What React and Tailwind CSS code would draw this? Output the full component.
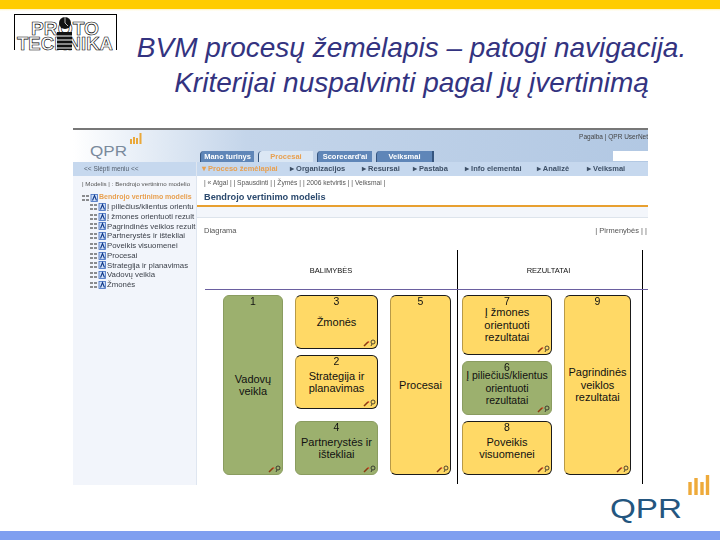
import React from 'react';

const FONT = { fontFamily: '"Liberation Sans", Arial, sans-serif' };

function ProtoLogo() {
  return (
    <div className="w-[103px] h-[36px] border-t border-l border-r border-black shrink-0 ml-[14px] mt-[3px]">
      <svg width="101" height="40" viewBox="0 0 101 40">
        <text x="16" y="20" textLength="68" lengthAdjust="spacingAndGlyphs" fontSize="19" fontWeight="700" fontFamily="Liberation Sans" fill="#fff" stroke="#000" strokeWidth="0.6">PROTO</text>
        <text x="2" y="35" textLength="96" lengthAdjust="spacingAndGlyphs" fontSize="19" fontWeight="700" fontFamily="Liberation Sans" fill="#fff" stroke="#000" strokeWidth="0.6">TECHNIKA</text>
        <circle cx="50" cy="8" r="6" fill="#111" />
        <path d="M50 2v6l3 3" stroke="#fff" strokeWidth="0.7" fill="none" />
        <rect x="42" y="17" width="15" height="18" fill="#111" />
        <path d="M42 21h15M42 25h15M42 29h15M42 33h15" stroke="#fff" strokeWidth="1" />
      </svg>
    </div>
  );
}

function QprSmall() {
  return (
    <div className="ml-[17px] mt-[3px] w-[54px] h-[27px] shrink-0">
      <svg width="54" height="29" viewBox="0 0 54 29">
        <path d="M41 11V6M44 11V4M47 11V5M50.5 11V0" stroke="#eaa83a" strokeWidth="2" />
        <text x="0" y="23" textLength="37" lengthAdjust="spacingAndGlyphs" fontSize="14" fontFamily="Liberation Sans" fill="#7a8a9c">QPR</text>
      </svg>
    </div>
  );
}

function Tab({ label, active, className }) {
  return (
    <div className={`h-[11px] flex items-center justify-center text-[7.5px] font-bold rounded-tl-[4px] border-l border-[#35557f] ${active ? 'bg-[#dbe7f4] text-[#e8a050]' : 'bg-[#5f86b8] text-white'} ${className}`}>
      {label}
    </div>
  );
}

function TreeIcon() {
  return (
    <svg width="16" height="8" viewBox="0 0 16 8" className="shrink-0">
      <path d="M0 2h3M4 2h3M0 6h3M4 6h3" stroke="#222" strokeWidth="1" />
      <rect x="9" y="0.5" width="6.5" height="7" fill="#cfe0f8" stroke="#3f6cc0" strokeWidth="0.8" />
      <path d="M10.5 6.5l2-5 2 5" stroke="#123a8a" strokeWidth="1.1" fill="none" />
    </svg>
  );
}

const TREE = [
  'Į piliečius/klientus orientu',
  'Į žmones orientuoti rezult',
  'Pagrindinės veiklos rezult',
  'Partnerystės ir ištekliai',
  'Poveikis visuomenei',
  'Procesai',
  'Strategija ir planavimas',
  'Vadovų veikla',
  'Žmonės',
];

function Sidebar() {
  return (
    <div className="w-[124px] shrink-0 bg-[#f2f5fb] border-r border-[#dfe6f0] overflow-hidden">
      <div className="h-[14px] bg-[#c6d8ee] flex items-center pl-[11px] text-[6.5px] text-[#55606e] whitespace-nowrap">&lt;&lt; Slėpti meniu &lt;&lt;</div>
      <div className="pl-[9px] pt-[3px] h-[16px] text-[6.2px] text-[#555] whitespace-nowrap">| Modelis | : Bendrojo vertinimo modelio</div>
      <div className="flex items-center gap-[1px] pl-[9px] mt-[1px] h-[9px]">
        <TreeIcon />
        <span className="text-[7px] font-bold text-[#e8a050] whitespace-nowrap">Bendrojo vertinimo modelis</span>
      </div>
      {TREE.map((t) => (
        <div key={t} className="flex items-center gap-[1px] pl-[17px] h-[9.75px]">
          <TreeIcon />
          <span className="text-[7.8px] text-[#3a3f48] whitespace-nowrap">{t}</span>
        </div>
      ))}
    </div>
  );
}

function CardIcons() {
  return (
    <svg width="13" height="8" viewBox="0 0 13 8" className="absolute right-[1px] bottom-[1px]">
      <path d="M1 7l4-4" stroke="#8a3a10" strokeWidth="1.6" />
      <path d="M5 2.5l1 1" stroke="#d8442a" strokeWidth="1.4" />
      <circle cx="10" cy="3" r="2" fill="none" stroke="#222" strokeWidth="0.8" />
      <path d="M9 5l-1 2" stroke="#222" strokeWidth="0.8" />
    </svg>
  );
}

function Card({ n, lines, green, tight, className }) {
  return (
    <div className={`relative rounded-[6px] border flex flex-col items-center justify-center text-center leading-[12.5px] text-[#111] whitespace-nowrap ${tight ? 'text-[10.5px]' : 'text-[11px]'} ${green ? 'bg-[#9cb06e] border-[#8a9c60]' : 'bg-[#ffd966] border-[#1b1b1b] border-l-[#b89a48]'} ${className}`}>
      <div className="absolute top-0 inset-x-0 text-[10.5px] leading-[11px]">{n}</div>
      {lines.map((l) => <div key={l}>{l}</div>)}
      <CardIcons />
    </div>
  );
}

function Diagram() {
  return (
    <div className="ml-[8px] w-[443px] flex flex-col">
      <div className="flex h-[40px] border-b border-[#6a5fa0] text-[7.5px] text-[#111]">
        <div className="w-[252px] flex items-center justify-center pt-[3px]">BALIMYBĖS</div>
        <div className="w-[186px] border-l border-r border-black flex items-center justify-center pt-[3px] pr-[3px]">REZULTATAI</div>
      </div>
      <div className="flex h-[194px]">
        <div className="w-[252px] pl-[18px] pt-[5px] flex gap-[12px]">
          <Card n="1" lines={['Vadovų', 'veikla']} green className="w-[60px] h-[180px]" />
          <div className="w-[83px] h-[180px] flex flex-col">
            <Card n="3" lines={['Žmonės']} className="h-[54px]" />
            <Card n="2" lines={['Strategija ir', 'planavimas']} className="h-[54px] mt-[6px]" />
            <Card n="4" lines={['Partnerystės ir', 'ištekliai']} green className="h-[54px] mt-[12px]" />
          </div>
          <Card n="5" lines={['Procesai']} className="w-[61px] h-[180px]" />
        </div>
        <div className="w-[186px] border-l border-r border-black pl-[4px] pt-[5px] flex gap-[12px]">
          <div className="w-[90px] h-[180px] flex flex-col">
            <Card n="7" lines={['Į žmones', 'orientuoti', 'rezultatai']} className="h-[60px]" />
            <Card n="6" lines={['Į piliečius/klientus', 'orientuoti', 'rezultatai']} green tight className="h-[54px] mt-[6px]" />
            <Card n="8" lines={['Poveikis', 'visuomenei']} className="h-[54px] mt-[6px]" />
          </div>
          <Card n="9" lines={['Pagrindinės', 'veiklos', 'rezultatai']} className="w-[67px] h-[180px]" />
        </div>
      </div>
    </div>
  );
}

function AppShot() {
  return (
    <div className="ml-[73px] w-[575px] h-[357px] overflow-hidden flex flex-col border-t-2 border-[#777] blur-[0.35px]">
      <div className="h-[32px] shrink-0 flex bg-gradient-to-r from-white via-[#c4d5ea] via-30% to-[#b2c8e3]">
        <QprSmall />
        <div className="flex flex-col flex-1">
          <div className="h-[21px] flex justify-end pt-[2px] text-[6.5px] text-[#444] whitespace-nowrap">Pagalba | QPR UserNet</div>
          <div className="flex pl-[56px] gap-[4px]">
            <Tab label="Mano turinys" className="w-[54px]" />
            <Tab label="Procesai" active className="w-[55px]" />
            <Tab label="Scorecard'ai" className="w-[55px]" />
            <Tab label="Veiksmai" className="w-[58px] border-r-2" />
            <div className="ml-auto w-[35px] h-[10px] bg-white" />
          </div>
        </div>
      </div>
      <div className="flex flex-1 min-h-0">
        <Sidebar />
        <div className="w-[451px] shrink-0 flex flex-col">
          <div className="h-[14px] shrink-0 bg-[#c6d8ee] flex items-center pl-[5px] text-[7.5px] font-bold text-[#3d4f66] whitespace-nowrap">
            <span className="w-[88px] text-[#e8a050]">▾ Proceso žemėlapiai</span>
            <span className="w-[72px]">▸ Organizacijos</span>
            <span className="w-[51px]">▸ Resursai</span>
            <span className="w-[52px]">▸ Pastaba</span>
            <span className="w-[72px]">▸ Info elementai</span>
            <span className="w-[50px]">▸ Analizė</span>
            <span>▸ Veiksmai</span>
          </div>
          <div className="h-[15px] shrink-0 pl-[7px] flex items-center text-[6.7px] text-[#555] whitespace-nowrap">| « Atgal | | Spausdinti | | Žymės | | 2006 ketvirtis | | Veiksmai |</div>
          <div className="h-[14px] shrink-0 pl-[7px] flex items-center text-[9.2px] font-bold text-[#2c4a6e] whitespace-nowrap">Bendrojo vertinimo modelis</div>
          <div className="h-[2px] shrink-0 bg-[#e8a030]" />
          <div className="h-[11px] shrink-0 bg-[#f3f6fb] border-b border-[#dde4ec]" />
          <div className="h-[32px] shrink-0 pl-[7px] pr-[1px] pt-[7px] flex justify-between text-[7.5px] text-[#555] whitespace-nowrap">
            <span>Diagrama</span>
            <span>| Pirmenybės | | </span>
          </div>
          <Diagram />
        </div>
      </div>
    </div>
  );
}

function QprBig() {
  return (
    <svg width="101" height="50" viewBox="0 0 101 50">
      <path d="M81 21V8M87 21V4M93 21V8M98.5 21V1" stroke="#eeaa3a" strokeWidth="3.4" />
      <text x="1" y="44" textLength="72" lengthAdjust="spacingAndGlyphs" fontSize="28" fontFamily="Liberation Sans" fill="#24567f">QPR</text>
    </svg>
  );
}

export default function App() {
  return (
    <div className="w-[720px] h-[540px] bg-white flex flex-col overflow-hidden" style={FONT}>
      <div className="h-[9px] shrink-0 bg-[#ffcc00]" />
      <div className="h-[2px] shrink-0 bg-gradient-to-b from-[#fff3c0] to-white" />
      <div className="h-[117px] shrink-0 flex items-start">
        <ProtoLogo />
        <div className="flex-1 pr-[14px] pt-[19px] text-center italic text-[28px] leading-[35px] text-[#333380] whitespace-nowrap">
          <div>BVM procesų žemėlapis – patogi navigacija.</div>
          <div>Kriterijai nuspalvinti pagal jų įvertinimą</div>
        </div>
      </div>
      <AppShot />
      <div className="flex justify-end pr-[10px] -mt-[11px] h-[57px] shrink-0"><QprBig /></div>
      <div className="flex-1 bg-[#7f9ff0]" />
    </div>
  );
}
